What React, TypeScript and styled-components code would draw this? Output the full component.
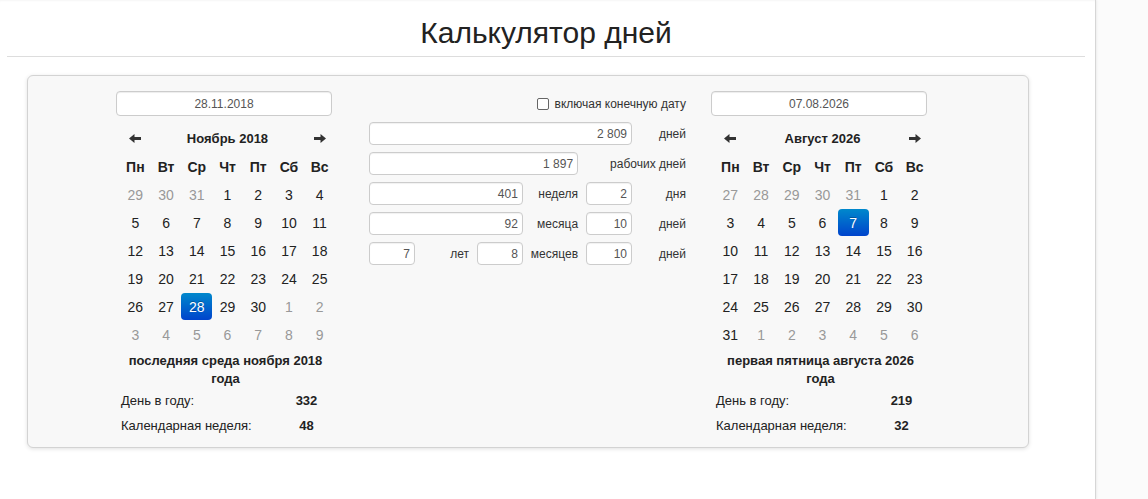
import React from "react";
import styled, { createGlobalStyle, css } from "styled-components";

const GlobalStyle = createGlobalStyle`
  html, body { margin: 0; padding: 0; background: #fbfbfb; }
  body { font-family: "Liberation Sans", Arial, sans-serif; color: #333; }
  * { box-sizing: border-box; }
`;

const Page = styled.div`
  display: flex;
  min-height: 100vh;
`;

const Main = styled.main`
  flex: none;
  width: 1096px;
  min-height: 100vh;
  background: #fff;
  border-right: 1px solid #d6d6d6;
  box-shadow: 1px 0 2px rgba(0, 0, 0, 0.06), inset 0 2px 2px -1px rgba(0, 0, 0, 0.04);
`;

const Header = styled.header`
  margin: 0 10px 0 7px;
  padding: 15px 0 5px;
  border-bottom: 1px solid #ddd;
`;

const Title = styled.h1`
  margin: 0;
  font-size: 30px;
  line-height: 36px;
  font-weight: normal;
  text-align: center;
  color: #222;
`;

const Panel = styled.section`
  display: flex;
  align-items: flex-start;
  width: 1002px;
  margin: 18px 0 0 27px;
  padding: 15px 0 9px 88px;
  background: #f8f8f8;
  border: 1px solid #d3d3d3;
  border-radius: 6px;
  box-shadow: 0 1px 4px rgba(0, 0, 0, 0.12);
`;

const DateBlock = styled.div`
  flex: none;
  width: 219px;
`;

const DateInput = styled.input`
  display: block;
  width: 216px;
  height: 25px;
  padding: 0;
  border: 1px solid #ccc;
  border-radius: 4px;
  background: #fff;
  box-shadow: inset 0 1px 1px rgba(0, 0, 0, 0.075);
  font: 12px "Liberation Sans", Arial, sans-serif;
  color: #555;
  text-align: center;
  outline: none;
`;

const Calendar = styled.div`
  display: grid;
  grid-template-columns: repeat(7, 1fr);
  grid-auto-rows: 27px;
  row-gap: 1px;
  width: 215px;
  margin: 9px 0 0 4px;
  font-size: 14px;
`;

const NavCell = styled.div`
  display: flex;
  align-items: center;
  justify-content: center;
  color: #333;
`;

const MonthTitle = styled.div`
  grid-column: span 5;
  display: flex;
  align-items: center;
  justify-content: center;
  font-size: 13px;
  font-weight: bold;
  color: #222;
`;

const WeekDay = styled.div`
  display: flex;
  align-items: center;
  justify-content: center;
  font-weight: bold;
  color: #222;
`;

const DayCell = styled.div<{ $muted?: boolean; $active?: boolean }>`
  display: flex;
  align-items: center;
  justify-content: center;
  border-radius: 4px;
  color: ${(p) => (p.$muted ? "#999" : "#222")};
  ${(p) =>
    p.$active &&
    css`
      color: #fff;
      background: linear-gradient(to bottom, #0088cc, #0044cc);
      text-shadow: 0 -1px 0 rgba(0, 0, 0, 0.25);
    `}
`;

const Caption = styled.div`
  margin-top: 4px;
  font-size: 13px;
  font-weight: bold;
  line-height: 18px;
  text-align: center;
  color: #222;
`;

const Stats = styled.div`
  display: grid;
  grid-template-columns: 1fr 51px;
  grid-auto-rows: 25px;
  align-items: center;
  width: 216px;
  padding-left: 5px;
  font-size: 13px;
  color: #222;
`;

const StatValue = styled.span`
  font-weight: bold;
  text-align: center;
`;

const Center = styled.div`
  flex: none;
  width: 317px;
  margin: 0 25px 0 34px;
`;

const CheckRow = styled.label`
  display: flex;
  align-items: center;
  justify-content: flex-end;
  gap: 6px;
  height: 25px;
  margin-bottom: 6px;
  font-size: 12px;
  color: #333;
`;

const CheckBox = styled.span`
  display: inline-block;
  width: 12px;
  height: 12px;
  border: 1px solid #666;
  border-radius: 2px;
  background: #fff;
`;

const Fields = styled.div`
  display: grid;
  grid-template-columns: repeat(6, 1fr);
  grid-auto-rows: 23px;
  column-gap: 8px;
  row-gap: 7px;
`;

const NumInput = styled.input<{ $span?: number }>`
  grid-column: span ${(p) => p.$span ?? 1};
  width: 100%;
  min-width: 0;
  height: 23px;
  padding: 0 4px;
  border: 1px solid #ccc;
  border-radius: 4px;
  background: #fff;
  box-shadow: inset 0 1px 1px rgba(0, 0, 0, 0.06);
  font: 12px "Liberation Sans", Arial, sans-serif;
  color: #555;
  text-align: right;
  outline: none;
`;

const FieldLabel = styled.span<{ $span?: number }>`
  grid-column: span ${(p) => p.$span ?? 1};
  display: flex;
  align-items: center;
  justify-content: flex-end;
  white-space: nowrap;
  font-size: 12px;
  color: #333;
`;

const Arrow = ({ dir }: { dir: "left" | "right" }) => (
  <svg width="12" height="9" viewBox="0 0 12 9" style={{ transform: dir === "right" ? "scaleX(-1)" : undefined }}>
    <polygon points="0,4.5 5.5,0 5.5,9" fill="#333" />
    <rect x="5" y="3" width="7" height="3" fill="#333" />
  </svg>
);

const WEEK = ["Пн", "Вт", "Ср", "Чт", "Пт", "Сб", "Вс"];

function buildDays(year: number, month: number) {
  const first = new Date(year, month, 1);
  const offset = (first.getDay() + 6) % 7;
  const start = new Date(year, month, 1 - offset);
  const days: { d: number; muted: boolean; key: string }[] = [];
  for (let i = 0; i < 42; i++) {
    const dt = new Date(start.getFullYear(), start.getMonth(), start.getDate() + i);
    days.push({ d: dt.getDate(), muted: dt.getMonth() !== month, key: `${dt.getMonth()}-${dt.getDate()}` });
  }
  return days;
}

type DateProps = {
  value: string;
  title: string;
  year: number;
  month: number;
  selected: number;
  caption: [string, string];
  dayOfYear: number;
  week: number;
};

const DatePanel = ({ value, title, year, month, selected, caption, dayOfYear, week }: DateProps) => (
  <DateBlock>
    <DateInput readOnly value={value} />
    <Calendar>
      <NavCell>
        <Arrow dir="left" />
      </NavCell>
      <MonthTitle>{title}</MonthTitle>
      <NavCell>
        <Arrow dir="right" />
      </NavCell>
      {WEEK.map((w) => (
        <WeekDay key={w}>{w}</WeekDay>
      ))}
      {buildDays(year, month).map((c) => (
        <DayCell key={c.key} $muted={c.muted} $active={!c.muted && c.d === selected}>
          {c.d}
        </DayCell>
      ))}
    </Calendar>
    <Caption>
      {caption[0]}
      <br />
      {caption[1]}
    </Caption>
    <Stats>
      <span>День в году:</span>
      <StatValue>{dayOfYear}</StatValue>
      <span>Календарная неделя:</span>
      <StatValue>{week}</StatValue>
    </Stats>
  </DateBlock>
);

export default function App() {
  return (
    <>
      <GlobalStyle />
      <Page>
        <Main>
          <Header>
            <Title>Калькулятор дней</Title>
          </Header>
          <Panel>
            <DatePanel
              value="28.11.2018"
              title="Ноябрь 2018"
              year={2018}
              month={10}
              selected={28}
              caption={["последняя среда ноября 2018", "года"]}
              dayOfYear={332}
              week={48}
            />
            <Center>
              <CheckRow>
                <CheckBox />
                включая конечную дату
              </CheckRow>
              <Fields>
                <NumInput readOnly $span={5} value="2 809" />
                <FieldLabel>дней</FieldLabel>

                <NumInput readOnly $span={4} value="1 897" />
                <FieldLabel $span={2}>рабочих дней</FieldLabel>

                <NumInput readOnly $span={3} value="401" />
                <FieldLabel>неделя</FieldLabel>
                <NumInput readOnly value="2" />
                <FieldLabel>дня</FieldLabel>

                <NumInput readOnly $span={3} value="92" />
                <FieldLabel>месяца</FieldLabel>
                <NumInput readOnly value="10" />
                <FieldLabel>дней</FieldLabel>

                <NumInput readOnly value="7" />
                <FieldLabel>лет</FieldLabel>
                <NumInput readOnly value="8" />
                <FieldLabel>месяцев</FieldLabel>
                <NumInput readOnly value="10" />
                <FieldLabel>дней</FieldLabel>
              </Fields>
            </Center>
            <DatePanel
              value="07.08.2026"
              title="Август 2026"
              year={2026}
              month={7}
              selected={7}
              caption={["первая пятница августа 2026", "года"]}
              dayOfYear={219}
              week={32}
            />
          </Panel>
        </Main>
      </Page>
    </>
  );
}
